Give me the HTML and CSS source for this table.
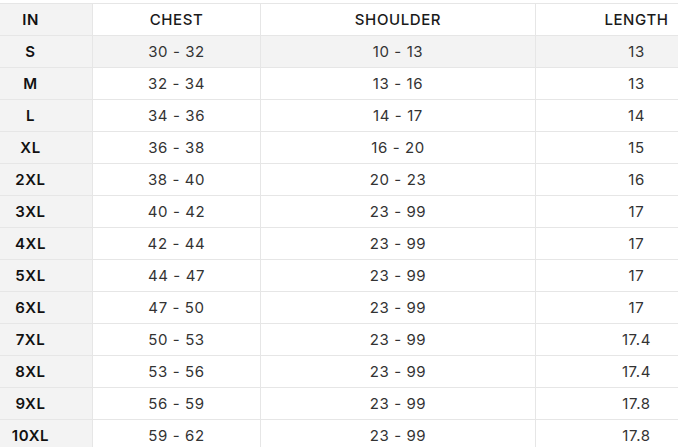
FILE: index.html
```html
<!DOCTYPE html>
<html>
<head>
<meta charset="utf-8">
<link rel="stylesheet" href="styles.css">
</head>
<body>
<div class="frame">
<table class="size-table">
  <colgroup>
    <col class="c-size"><col class="c-chest"><col class="c-shoulder"><col class="c-length">
  </colgroup>
  <thead>
    <tr><th class="size">IN</th><th>CHEST</th><th>SHOULDER</th><th>LENGTH</th></tr>
  </thead>
  <tbody>
    <tr class="shade"><td class="size">S</td><td>30 - 32</td><td>10 - 13</td><td>13</td></tr>
    <tr><td class="size">M</td><td>32 - 34</td><td>13 - 16</td><td>13</td></tr>
    <tr><td class="size">L</td><td>34 - 36</td><td>14 - 17</td><td>14</td></tr>
    <tr><td class="size">XL</td><td>36 - 38</td><td>16 - 20</td><td>15</td></tr>
    <tr><td class="size">2XL</td><td>38 - 40</td><td>20 - 23</td><td>16</td></tr>
    <tr><td class="size">3XL</td><td>40 - 42</td><td>23 - 99</td><td>17</td></tr>
    <tr><td class="size">4XL</td><td>42 - 44</td><td>23 - 99</td><td>17</td></tr>
    <tr><td class="size">5XL</td><td>44 - 47</td><td>23 - 99</td><td>17</td></tr>
    <tr><td class="size">6XL</td><td>47 - 50</td><td>23 - 99</td><td>17</td></tr>
    <tr><td class="size">7XL</td><td>50 - 53</td><td>23 - 99</td><td>17.4</td></tr>
    <tr><td class="size">8XL</td><td>53 - 56</td><td>23 - 99</td><td>17.4</td></tr>
    <tr><td class="size">9XL</td><td>56 - 59</td><td>23 - 99</td><td>17.8</td></tr>
    <tr><td class="size">10XL</td><td>59 - 62</td><td>23 - 99</td><td>17.8</td></tr>
  </tbody>
</table>
</div>
</body>
</html>
```
FILE: styles.css
```css
html, body {
  margin: 0;
  padding: 0;
  background: #fff;
  overflow: hidden;
}
.frame {
  width: 678px;
  height: 447px;
  overflow: hidden;
  padding-top: 3px;
  box-sizing: border-box;
}
.size-table {
  margin-left: -32px;
  width: 769px;
  table-layout: fixed;
  border-collapse: collapse;
  font-family: Inter, "Liberation Sans", sans-serif;
  font-size: 15px;
  color: #333;
  letter-spacing: 0.6px;
}
.c-size { width: 124px; }
.c-chest { width: 168px; }
.c-shoulder { width: 275px; }
.c-length { width: 202px; }
.size-table th,
.size-table td {
  border: 1px solid #e6e6e6;
  height: 32px;
  padding: 0;
  text-align: center;
  vertical-align: middle;
  box-sizing: border-box;
}
.size-table th {
  font-weight: 500;
  color: #1a1a1a;
}
.size-table td.size,
.size-table th.size {
  background: #f3f3f3;
  font-weight: 600;
  color: #111;
}
.size-table tr.shade td {
  background: #f3f3f3;
}
```
